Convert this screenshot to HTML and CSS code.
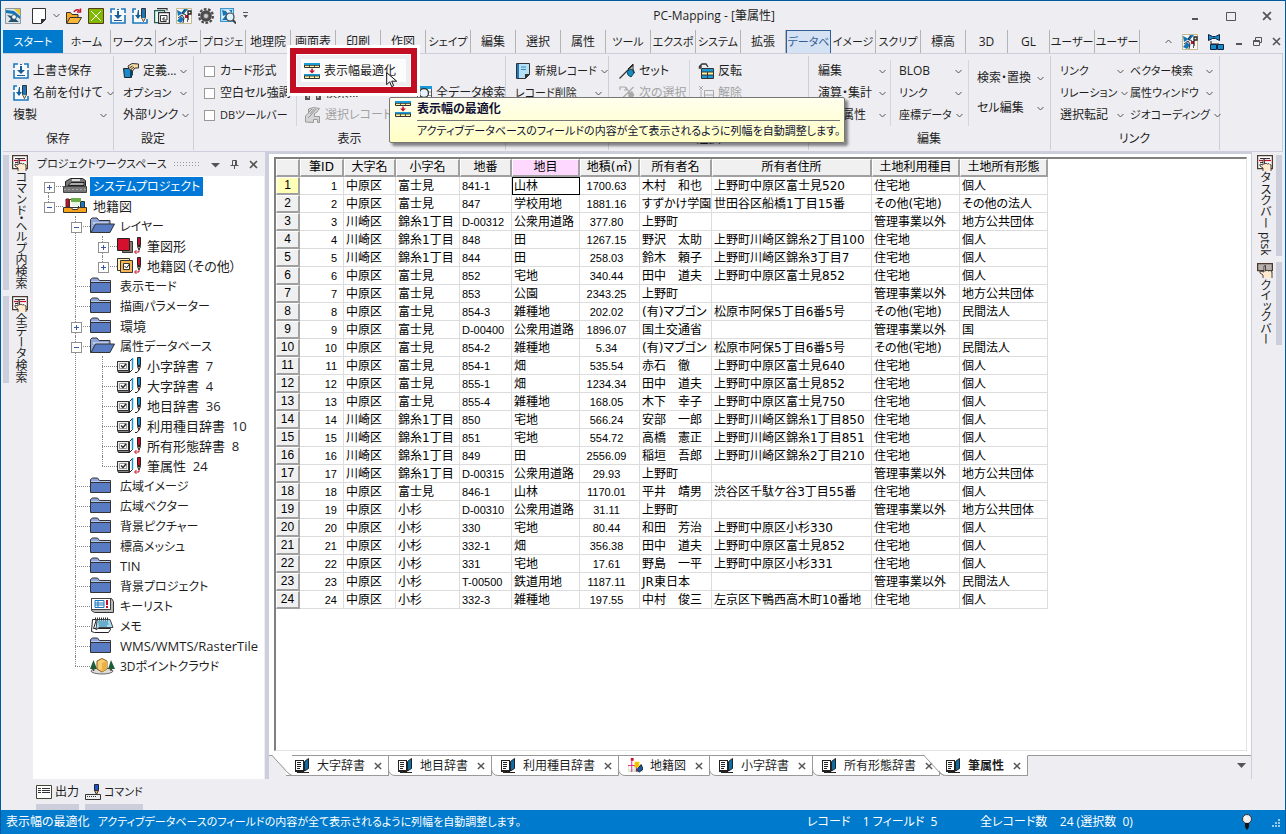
FILE: index.html
```html
<!DOCTYPE html>
<html lang="ja">
<head>
<meta charset="utf-8">
<title>PC-Mapping - [筆属性]</title>
<link rel="stylesheet" href="styles.css">
</head>
<body>
<svg class="defs" aria-hidden="true">
  <symbol id="app" viewBox="0 0 16 16"><path fill="#dfe6ea" stroke="#8b98a3" d="M.5.5h15v15H.5z"/><path fill="#1476b8" d="M1 2l8 1 6 5v3L8 6 1 5z"/><path fill="#e8c52a" d="M9 1h6v6z"/><path fill="#24506b" d="M2 7l5 1 7 6H3l3-3z"/><circle cx="9" cy="9" r="2.4" fill="#fff" stroke="#24506b"/></symbol>
  <symbol id="page" viewBox="0 0 16 16"><path fill="#fff" stroke="#333" d="M1.500.500h13v11l-4 4h-9z"/><path fill="#333" d="M10 16v-5h5z"/></symbol>
  <symbol id="open" viewBox="0 0 16 16"><path fill="#f5a623" stroke="#333" d="M.5 15V4.500h4l1.500 2h6V9"/><path fill="#fbb63a" stroke="#333" d="M.7 15.500L4 9.500h11.500l-3.500 6z"/><path fill="none" stroke="#c8102e" stroke-width="1.500" d="M8 4c1-2 3-3 5.500-1.500M14.500.5v3.500h-3.500"/></symbol>
  <symbol id="grid" viewBox="0 0 16 16"><path fill="#7fba00" stroke="#5a3a1e" d="M.5.500h15v15H.5z"/><path stroke="#fff" fill="none" d="M3 3l10 10M13 3L3 13"/></symbol>
  <symbol id="save" viewBox="0 0 16 16"><path fill="#f7f9fb" d="M1 1h14v14H1z"/><path fill="none" stroke="#1b78bd" stroke-width="1.600" d="M5 1H1v4M1 7v8h14V7M11 1h4v4"/><path fill="#1b5e97" d="M7 1h2v1H7zm0 2h2v4h3l-4 4-4-4h3zM4 12h8v1H4z"/></symbol>
  <symbol id="saveas" viewBox="0 0 16 16"><path fill="#f7f9fb" d="M1 1h14v14H1z"/><path fill="none" stroke="#1b78bd" stroke-width="1.600" d="M4 1H1v4M1 7v8h14v-4"/><path fill="#1b5e97" d="M6 2h1v5h2l-3 4-3-4h2z"/><path fill="#1b78bd" stroke="#333" d="M9.500.500h4v9l-2 4-2-4z"/><path fill="#ffd79a" d="M10 10h3l-1.500 3z"/></symbol>
  <symbol id="copy" viewBox="0 0 16 16"><path fill="#eafbf4" stroke="#235b50" stroke-width="1.200" d="M.6 2.600h10v12H.6z"/><path fill="#fff" stroke="#333" stroke-width="1.200" d="M4.600 4.600h10.800v10.800H4.600zM3 .6h10v2"/><path fill="none" stroke="#333" d="M12.500 13.500h-6v-6h6.500v4.500h-4v-2h2"/></symbol>
  <symbol id="map" viewBox="0 0 16 16"><path fill="#f5f7f8" stroke="#c9b98a" d="M.5.500h15v15H.5z"/><path fill="#1476b8" d="M1 2l6 3-5 3zM8 1h4L7 7 6 4zM1 13l4-5 3 3-3 4z"/><path fill="none" stroke="#333" d="M2 10l4-3 2 3-1 5M9 2l-3 3 4 2"/><path fill="#c8102e" d="M9 7h3v3H9z"/><path fill="none" stroke="#222" stroke-width="1.300" d="M12 12V3h3v3h-3M11 13h1"/></symbol>
  <symbol id="gear" viewBox="0 0 16 16"><circle cx="8" cy="8" r="6.900" fill="none" stroke="#4b4b4b" stroke-width="2.200" stroke-dasharray="2.700 1.600"/><circle cx="8" cy="8" r="4.300" fill="#777" stroke="#4b4b4b" stroke-width="3"/><circle cx="8" cy="8" r="2" fill="#ccc"/></symbol>
  <symbol id="mapfind" viewBox="0 0 16 16"><path fill="#e5f2fa" stroke="#3a95d0" stroke-width="1.300" d="M.6.600h12.800v12.800H.6z"/><path fill="#1476b8" d="M2 2l4 1 2 3-5 2zM9 2h3v3zM2 12l4-5 1 5z"/><circle cx="10" cy="9" r="4" fill="#dff1fb" stroke="#444" stroke-width="1.200"/><path stroke="#444" stroke-width="2" d="M13 12l3 3.500"/></symbol>
  <symbol id="define" viewBox="0 0 16 16"><path fill="#1b8ac9" stroke="#222" d="M.5 5.500h8v9h-7z"/><path fill="#14415f" d="M7 6l3-2v8l-3 3z"/><path fill="#f6d9a4" stroke="#333" d="M5 3l4-2.500 6.500.5v4H12L9.500 8 6 6z"/><path stroke="#333" d="M6.500 5l3-2M8 6.500l3-2.500"/></symbol>
  <symbol id="fit" viewBox="0 0 16 16"><path fill="#fff3a0" stroke="#333" d="M.5.500h15v4H.5zM.5 11.500h15v4H.5z"/><path fill="#1b9ad8" d="M0 0h16v2H0zM0 11h16v2H0z"/><path stroke="#333" stroke-width=".8" d="M0 2.500h16M5.500 2v3M10.500 2v3M0 13h16M5.500 13v3M10.500 13v3"/><path fill="#c8102e" d="M7.300 5.500h1.500v2H11L8 10.500l-3-3h2.300z"/></symbol>
  <symbol id="find" viewBox="0 0 16 16"><path fill="#555" d="M2 3h4v3h4V3h4l2 6v6h-5v-5H5v5H0V9z"/><path fill="#bbb" d="M2 10h2v3H2zM12 10h2v3h-2z"/></symbol>
  <symbol id="selrec" viewBox="0 0 16 16"><path fill="#d4d4d4" stroke="#999" d="M.5 15V9l3-3V2l5-1.500 6 1-3 4-2 1v3h5v6h-2v-3h-4v3z"/><path stroke="#999" d="M4 5l3-3M5 7l4-5M6 8l5-6M3 11l3-3"/></symbol>
  <symbol id="tablefind" viewBox="0 0 16 16"><path fill="#fff" stroke="#555" d="M1.500 1.500h14v13h-14z"/><path fill="#1b9ad8" d="M1 1h15v3H1z"/><path stroke="#999" d="M2 7h13M2 10.500h13"/><circle cx="8" cy="8" r="4.500" fill="#e9f5fc" stroke="#333" stroke-width="1.300"/><path stroke="#333" stroke-width="2" d="M5 12l-3 3"/></symbol>
  <symbol id="newrec" viewBox="0 0 16 16"><path fill="#b9dff5" stroke="#333" d="M1.500.500h13v11l-4 4h-9z"/><path fill="#1b78bd" d="M2 1h2v14H2z"/><path stroke="#2e8cc4" d="M6 4h5M6 6.500h5"/><path fill="#333" d="M10 16v-5h5z"/></symbol>
  <symbol id="set" viewBox="0 0 16 16"><path stroke="#333" stroke-width="1.300" d="M.5 15.500L14 2"/><path fill="#178bc8" stroke="#145" d="M8 8l5-2 2 4-3 4-3-2z"/><path stroke="#222" fill="none" d="M14 1l-5 5M14 1v5l1.500 4"/></symbol>
  <symbol id="nextsel" viewBox="0 0 16 16"><path fill="none" stroke="#aaa" stroke-width="1.200" d="M1 5V2h5l2 3-3 0M1 15.500L14.500 2"/><path fill="#aaa" d="M9 8l4-2 2.500 4-3 4-3-2z"/><path stroke="#aaa" d="M7 2l8 12"/></symbol>
  <symbol id="invert" viewBox="0 0 16 16"><path fill="none" stroke="#333" stroke-width="1.300" d="M3 5H.7M1 4l3-3h4l2 3M3 2v3"/><path fill="#fff3a0" stroke="#333" d="M3.500 5.500h12v10h-12z"/><path fill="#1b9ad8" d="M4 6h11v3H4zM4 12h11v3H4z"/><path stroke="#333" d="M4 9h11M4 12h11M9.500 9v6"/></symbol>
  <symbol id="clear" viewBox="0 0 16 16"><path fill="none" stroke="#aaa" d="M1 1l4 4M5 1L1 5M3 5v9h3M6.500 5.500h9v9h-9zM7 10h8"/></symbol>
  <symbol id="remote" viewBox="0 0 16 16"><path fill="#178bc8" stroke="#124" d="M.5.500l4 2h3l4-2v6l-4-2h-3l-4 2zM2.500 10.500h6v5h-6zM9.500 10.500h6v5h-6z"/><path stroke="#222" fill="none" d="M3 7v3h8"/></symbol>
  <symbol id="sysproj" viewBox="0 0 25 18"><path fill="#777" stroke="#222" d="M2.500 4.500l5-3h12l3 2v6h-20z"/><path fill="#aaa" stroke="#222" d="M8 5.500h13v3H5z"/><path fill="#ddd" d="M9 2h8v2H9z"/><path fill="#777" stroke="#444" d="M.5 9.500h23v6H.5z"/><path stroke="#aaa" stroke-dasharray="2 2" d="M1 12.500h22"/></symbol>
  <symbol id="proj" viewBox="0 0 25 18"><path fill="#fff" stroke="#333" d="M6.500 2.500h9v8h-9zM17.500 4.500h4v6h-4z"/><path fill="#6fae46" d="M8 1h10v4H8z"/><path fill="#e9f5e6" d="M9 5h8v4H9z"/><path fill="#c8102e" stroke="#622" d="M3 2h3v8H3z"/><path fill="#1b78bd" d="M18 5h3v6h-3z"/><path fill="#f6a21d" stroke="#333" d="M.5 10.500h8l1 2h5l1-2h8v5H.5z"/></symbol>
  <symbol id="folder" viewBox="0 0 25 18"><path fill="#8fa5dd" stroke="#333" d="M.5 14.500v-12l2-1.500h5l2 2.500h11v11z"/><path fill="#587bc4" d="M1 6h19v9H1z"/><path fill="none" stroke="#333" d="M.5 15.500v-10h20v10z"/><path stroke="#b9c8ec" d="M1 4.500h19"/></symbol>
  <symbol id="folderopen" viewBox="0 0 25 18"><path fill="#8fa5dd" stroke="#333" d="M.5 15.500v-13L2 1h5l2 2.500h11v5l-3 7z"/><path fill="#b9c8ec" d="M3 5h15v2H3z"/><path fill="#587bc4" stroke="#333" d="M1 15.500L5.500 7h19L20 15.500z"/></symbol>
  <symbol id="redpen" viewBox="0 0 8 18"><path fill="#c8102e" stroke="#222" d="M3.500.500h3v8h-3z"/><path fill="#ffe3b0" stroke="#222" d="M3.500 9.500h3L5 13z"/><path stroke="#c8102e" fill="none" d="M5 13v2H1M2.500 13L.5 15l2 2"/></symbol>
  <symbol id="bluepen" viewBox="0 0 8 18"><path fill="#178bc8" stroke="#222" d="M3.500.500h3v8h-3z"/><path fill="#ffe3b0" stroke="#222" d="M3.500 9.500h3L5 13z"/><path stroke="#222" fill="none" d="M5 13l-2 2.500H1"/></symbol>
  <symbol id="layer" viewBox="0 0 25 18"><path fill="#8d7b6f" stroke="#333" d="M5.500 4.500h10v11h-10z"/><path fill="#d5102e" stroke="#222" d="M.5 1.500h12v12H.5z"/><use href="#redpen" x="17" width="8" height="18"/></symbol>
  <symbol id="layers" viewBox="0 0 25 18"><path fill="#ffe9b5" stroke="#333" d="M.5 1.500h12v12H.5z"/><path fill="#f6b756" stroke="#333" d="M3.500 3.500h12v12h-12z"/><path fill="#fff" stroke="#333" d="M6.500 6.500h6v6h-6z"/><path fill="none" stroke="#222" d="M7.500 9l2 2 3-4"/><use href="#redpen" x="17" width="8" height="18"/></symbol>
  <symbol id="db" viewBox="0 0 17 18"><path fill="#888" stroke="#222" d="M1.500 15.500l-1-2v-9h11.500v11z"/><path fill="#eee" stroke="#333" d="M.5 4.500h11v9H.5z"/><path fill="#fff" stroke="#999" d="M2.500 6.500h7v5h-7z"/><path stroke="#222" stroke-width="1.400" fill="none" d="M4 8.500l2 2 3-3.500"/><path fill="#fff" stroke="#222" d="M12.500 15.500l3-3v-11l-3 3z"/><path stroke="#1b9ad8" stroke-width="1.500" d="M15.500 1v11"/></symbol>
  <symbol id="dbred" viewBox="0 0 25 18"><use href="#db" width="17" height="18"/><use href="#redpen" x="17" width="8" height="18"/></symbol>
  <symbol id="dbblue" viewBox="0 0 25 18"><use href="#db" width="17" height="18"/><use href="#bluepen" x="17" width="8" height="18"/></symbol>
  <symbol id="keylist" viewBox="0 0 25 18"><path fill="#bbb" stroke="#333" d="M4.500 15.500l-3-2V1.500h20l2 3v11z"/><path fill="#fff" stroke="#444" d="M1.500 1.500h19v11h-19z"/><path fill="#fff" stroke="#1b78bd" d="M5 3.500h9v7H5zM5 6h9M5 8h9M8 3.500v7"/><path fill="#c8102e" d="M16 3h2v5h-2zM16 9h2v2h-2z"/></symbol>
  <symbol id="memo" viewBox="0 0 25 18"><path fill="#fff" stroke="#222" d="M1.500 14.500l1-12h4l-3 9h17v1l-2 3h-14z"/><path fill="#a9dcf0" stroke="#444" d="M7 2.500h13l3 8H9l-3 2.500z"/><path stroke="#2a7fa5" d="M8 5h10M8.500 7h10M9 9h8"/><path stroke="#333" stroke-dasharray="1 1" stroke-width="3" d="M5 2h14"/></symbol>
  <symbol id="cloud" viewBox="0 0 25 18"><ellipse cx="12" cy="14" rx="11" ry="3" fill="#ddd" stroke="#666"/><path fill="#1f5c38" d="M3.500 3L7 12H0zM21 3l4 9h-7z"/><path stroke="#543" stroke-width="1.500" d="M3.500 12v2M21 12v2"/><path fill="#f7cf72" stroke="#8a5a1c" d="M7 4l5-2.500 5 2.500v8l-5 3-5-3z"/><path fill="#eab044" d="M12 6l5-2v8l-5 3z"/></symbol>
  <symbol id="book" viewBox="0 0 15 15"><path fill="#222" d="M0 2h9v12h5v1H2v-1H0z"/><path fill="#fff" d="M1 3h7v9H1z"/><path stroke="#222" d="M2 4.500h4M2 6.500h4M2 8.500h4M2 10.500h3"/><path fill="#0d6da4" stroke="#222" d="M9.500 3.500l4-3v10l-4 2.500z"/></symbol>
  <symbol id="atlas" viewBox="0 0 16 16"><path fill="#d8ead2" d="M0 8h16v7H0z"/><path fill="#fff" d="M1 5h5v7H1z"/><path stroke="#e0218a" d="M4 3v12M0 8h9M9 15V6"/><path fill="#c8102e" d="M3 0h3v3H3z"/><path fill="#f2c500" d="M7 4h5v6H7z"/><path fill="#1757a8" stroke="#222" d="M9 13l5-6 2 5-4 3z"/></symbol>
  <symbol id="handlist" viewBox="0 0 16 16"><path fill="#fff" stroke="#4b3a32" stroke-width="1.300" d="M.6.600h14.800v13H.6z"/><path stroke="#333" d="M3 3.500h10M3 7.500h5"/><path stroke="#c8102e" stroke-width="1.300" d="M2 5.500h12"/><path fill="#ffe9cf" stroke="#333" stroke-width=".9" d="M6 16v-3l-3-2V9l3 1V5l1.500-.5V9l1.500-1 1.500 1 1.500-.5 1 1 1 .5v6"/></symbol>
  <symbol id="handbar" viewBox="0 0 16 16"><path fill="#b9b1ab" stroke="#4b3a32" stroke-width="1.300" d="M.6 1.600h14.800v7H.6z"/><path fill="#ffe9cf" stroke="#333" stroke-width=".9" d="M6 16v-3l-3-2V9l4 1V4l1.500-.5V9l1.500-1 1.500 1 1.500-.5 1 1 1 .5v6"/></symbol>
  <symbol id="output" viewBox="0 0 16 16"><path fill="#fff" stroke="#443" d="M.5 1.500h15v13H.5z"/><path stroke="#333" d="M2 4.500h3M6 4.500h8M2 6.500h3M6 6.500h8M2 8.500h3M6 8.500h8"/></symbol>
  <symbol id="command" viewBox="0 0 16 16"><path fill="#eee" stroke="#333" d="M.5 10.500h15v5H.5z"/><path stroke="#333" stroke-dasharray="1 1" d="M2 12.500h9"/><path fill="#1b55c8" stroke="#223" d="M9.500.500h4v6h-4z"/><path fill="#f9b24d" stroke="#333" d="M9.500 6.500h4l-2 4z"/></symbol>
  <symbol id="chev" viewBox="0 0 7 7"><path fill="none" stroke="#555" d="M.5 2l3 3 3-3"/></symbol>
  <symbol id="x" viewBox="0 0 9 9"><path fill="none" stroke="#555" stroke-width="1.600" d="M1 1l7 7M8 1L1 8"/></symbol>
  <symbol id="bulb" viewBox="0 0 12 16"><circle cx="6" cy="5" r="4.500" fill="#eee" stroke="#333"/><path fill="#111" d="M4 9h4v4l-2 3-2-3z"/><path stroke="#fff" stroke-width="1.500" d="M4 3l2 2"/></symbol>
</svg>

<header class="titlebar">
  <div class="quick">
    <svg class="i16 appicon"><use href="#app"/></svg>
    <button aria-label="新規"><svg class="i16"><use href="#page"/></svg></button>
    <button class="tiny" aria-label="新規メニュー"><svg class="chev"><use href="#chev"/></svg></button>
    <button aria-label="開く"><svg class="i16"><use href="#open"/></svg></button>
    <button aria-label="表"><svg class="i16"><use href="#grid"/></svg></button>
    <button aria-label="保存"><svg class="i16"><use href="#save"/></svg></button>
    <button aria-label="別名保存"><svg class="i16"><use href="#saveas"/></svg></button>
    <button aria-label="複写"><svg class="i16"><use href="#copy"/></svg></button>
    <button aria-label="地図"><svg class="i16"><use href="#map"/></svg></button>
    <button aria-label="設定"><svg class="i16"><use href="#gear"/></svg></button>
    <button aria-label="地図検索"><svg class="i16"><use href="#mapfind"/></svg></button>
    <button class="tiny" aria-label="カスタマイズ"><svg class="chev" viewBox="0 0 7 7"><path fill="#555" d="M1 0h5v1H1zM1 3h5L3.500 6z"/></svg></button>
  </div>
  <h1>PC-Mapping - [筆属性]</h1>
  <div class="winbtns">
    <button aria-label="最小化"><svg viewBox="0 0 10 10"><path fill="#555" d="M2 7h6v2H2z"/></svg></button>
    <button aria-label="最大化"><svg viewBox="0 0 10 10"><path fill="none" stroke="#555" d="M.5 1.500h9v8h-9z"/></svg></button>
    <button aria-label="閉じる"><svg><use href="#x"/></svg></button>
  </div>
</header>

<nav class="tabs">
  <button class="start kana">スタート</button><button class="home kana">ホーム</button><button class="kana">ワークス</button><button class="kana">インポー</button><button class="kana">プロジェ</button><button>地理院</button><button>画面表</button><button>印刷</button><button>作図</button><button class="kana">シェイプ</button><button>編集</button><button>選択</button><button>属性</button><button class="kana">ツール</button><button class="kana">エクスポ</button><button class="kana">システム</button><button>拡張</button><button class="current kana">データベ</button><button class="kana">イメージ</button><button class="kana">スクリプ</button><button>標高</button><button class="short">3D</button><button class="short">GL</button><button class="kana">ユーザー</button><button class="kana">ユーザー</button>
  <div class="tabtools">
    <button aria-label="リボンを閉じる"><svg class="chev" viewBox="0 0 7 7"><path fill="none" stroke="#555" d="M.5 5l3-3 3 3"/></svg></button>
    <button aria-label="地図"><svg class="i16"><use href="#map"/></svg></button>
    <button aria-label="リモート"><svg class="i16"><use href="#remote"/></svg></button>
    <button aria-label="最小化"><svg class="i9" viewBox="0 0 9 9"><path fill="#555" d="M2 6h6v2H2z"/></svg></button>
    <button aria-label="元に戻す"><svg class="i9" viewBox="0 0 9 9"><path fill="none" stroke="#555" d="M2.500 3V.500h6v5H6M.5 3.500h6v5h-6zM0 4.500h6"/></svg></button>
    <button aria-label="閉じる"><svg class="i9"><use href="#x"/></svg></button>
  </div>
</nav>

<section class="ribbon">
  <div class="group g-save">
    <div class="cols"><div class="col">
      <button><svg class="i16"><use href="#save"/></svg>上書き保存</button>
      <button><svg class="i16"><use href="#saveas"/></svg>名前を付けて<svg class="chev"><use href="#chev"/></svg></button>
      <button>複製<svg class="chev"><use href="#chev"/></svg></button>
    </div></div>
    <h2>保存</h2>
  </div>
  <div class="group g-set">
    <div class="cols"><div class="col">
      <button><svg class="i16"><use href="#define"/></svg>定義...<svg class="chev"><use href="#chev"/></svg></button>
      <button class="kana">オプション<svg class="chev"><use href="#chev"/></svg></button>
      <button>外部リンク<svg class="chev"><use href="#chev"/></svg></button>
    </div></div>
    <h2>設定</h2>
  </div>
  <div class="group g-view">
    <div class="cols">
      <div class="col checks">
        <label><input type="checkbox">カード形式</label>
        <label><input type="checkbox">空白セル強調</label>
        <label class="kana"><input type="checkbox">DBツールバー</label>
      </div>
      <div class="col display">
        <button class="spot"><span class="face"><svg class="i16"><use href="#fit"/></svg>表示幅最適化</span></button>
        <button><svg class="i16"><use href="#find"/></svg>検索...</button>
        <button disabled><svg class="i16"><use href="#selrec"/></svg>選択レコードのみ</button>
        <svg class="cursor" viewBox="0 0 12 17"><path fill="#fff" stroke="#111" d="M.7.700v12l3-3 2 5 2-1-2-4.500h5z"/></svg>
        <div class="tip" role="tooltip">
          <svg class="i16"><use href="#fit"/></svg>
          <div><strong>表示幅の最適化</strong><p>アクティブデータベースのフィールドの内容が全て表示されるように列幅を自動調整します。</p></div>
        </div>
      </div>
      <div class="col whole">
        <span></span>
        <button><svg class="i16"><use href="#tablefind"/></svg>全データ検索</button>
      </div>
    </div>
    <h2>表示</h2>
  </div>
  <div class="group g-rec">
    <div class="cols"><div class="col">
      <button class="kana"><svg class="i16"><use href="#newrec"/></svg>新規レコード<svg class="chev"><use href="#chev"/></svg></button>
      <button class="kana">レコード削除<svg class="chev"><use href="#chev"/></svg></button>
    </div></div>
    <h2>レコード</h2>
  </div>
  <div class="group g-sel">
    <div class="cols">
      <div class="col">
        <button><svg class="i16"><use href="#set"/></svg>セット</button>
        <button disabled><svg class="i16"><use href="#nextsel"/></svg>次の選択</button>
      </div>
      <div class="col">
        <button><svg class="i16"><use href="#invert"/></svg>反転</button>
        <button disabled><svg class="i16"><use href="#clear"/></svg>解除</button>
      </div>
    </div>
    <h2>選択</h2>
  </div>
  <div class="group g-edit">
    <div class="cols">
      <div class="col">
        <button>編集<svg class="chev"><use href="#chev"/></svg></button>
        <button>演算・集計<svg class="chev"><use href="#chev"/></svg></button>
        <button>転記属性<svg class="chev"><use href="#chev"/></svg></button>
      </div>
      <div class="col">
        <button>BLOB<svg class="chev"><use href="#chev"/></svg></button>
        <button class="kana">リンク<svg class="chev"><use href="#chev"/></svg></button>
        <button class="kana">座標データ<svg class="chev"><use href="#chev"/></svg></button>
      </div>
      <div class="col pair">
        <button>検索・置換<svg class="chev"><use href="#chev"/></svg></button>
        <button>セル編集<svg class="chev"><use href="#chev"/></svg></button>
      </div>
    </div>
    <h2>編集</h2>
  </div>
  <div class="group g-link">
    <div class="cols">
      <div class="col">
        <button class="kana">リンク<svg class="chev"><use href="#chev"/></svg></button>
        <button class="kana">リレーション<svg class="chev"><use href="#chev"/></svg></button>
        <button>選択転記<svg class="chev"><use href="#chev"/></svg></button>
      </div>
      <div class="col">
        <button class="kana">ベクター検索<svg class="chev"><use href="#chev"/></svg></button>
        <button class="kana">属性ウィンドウ<svg class="chev"><use href="#chev"/></svg></button>
        <button class="kana">ジオコーディング<svg class="chev"><use href="#chev"/></svg></button>
      </div>
    </div>
    <h2>リンク</h2>
  </div>
</section>

<main class="work">
  <nav class="side left">
    <button><svg class="i16"><use href="#handlist"/></svg>コマンド・ヘルプ内検索</button>
    <button><svg class="i16"><use href="#handlist"/></svg>全データ検索</button>
  </nav>

  <aside class="panel">
    <header>
      <h2 class="kana">プロジェクトワークスペース</h2><i class="dots"></i>
      <button aria-label="メニュー"><svg class="i9" viewBox="0 0 9 9"><path fill="#555" d="M0 3h9L4.500 7.500z"/></svg></button>
      <button aria-label="固定"><svg class="i9" viewBox="0 0 9 9"><path fill="none" stroke="#555" d="M2.500 5.500v-5h4v5M5.500 0v5M.5 5.500h8M4.500 6v3"/></svg></button>
      <button aria-label="閉じる"><svg class="i9"><use href="#x"/></svg></button>
    </header>
    <ul class="tree">
      <li><div class="node plus"><svg><use href="#sysproj"/></svg><span class="chosen kana">システムプロジェクト</span></div></li>
      <li><div class="node minus"><svg><use href="#proj"/></svg><span>地籍図</span></div>
        <ul>
          <li><div class="node minus"><svg><use href="#folderopen"/></svg><span class="kana">レイヤー</span></div>
            <ul>
              <li><div class="node plus"><svg><use href="#layer"/></svg><span>筆図形</span></div></li>
              <li><div class="node plus"><svg><use href="#layers"/></svg><span>地籍図（その他）</span></div></li>
            </ul>
          </li>
          <li><div class="node"><svg><use href="#folder"/></svg><span class="kana">表示モード</span></div></li>
          <li><div class="node"><svg><use href="#folder"/></svg><span class="kana">描画パラメーター</span></div></li>
          <li><div class="node plus"><svg><use href="#folder"/></svg><span>環境</span></div></li>
          <li><div class="node minus"><svg><use href="#folderopen"/></svg><span class="kana">属性データベース</span></div>
            <ul>
              <li><div class="node"><svg><use href="#dbblue"/></svg><span>小字辞書  7</span></div></li>
              <li><div class="node"><svg><use href="#dbblue"/></svg><span>大字辞書  4</span></div></li>
              <li><div class="node"><svg><use href="#dbblue"/></svg><span>地目辞書  36</span></div></li>
              <li><div class="node"><svg><use href="#dbblue"/></svg><span>利用種目辞書  10</span></div></li>
              <li><div class="node"><svg><use href="#dbred"/></svg><span>所有形態辞書  8</span></div></li>
              <li><div class="node"><svg><use href="#dbred"/></svg><span>筆属性  24</span></div></li>
            </ul>
          </li>
          <li><div class="node"><svg><use href="#folder"/></svg><span class="kana">広域イメージ</span></div></li>
          <li><div class="node"><svg><use href="#folder"/></svg><span class="kana">広域ベクター</span></div></li>
          <li><div class="node"><svg><use href="#folder"/></svg><span class="kana">背景ピクチャー</span></div></li>
          <li><div class="node"><svg><use href="#folder"/></svg><span class="kana">標高メッシュ</span></div></li>
          <li><div class="node"><svg><use href="#folder"/></svg><span>TIN</span></div></li>
          <li><div class="node"><svg><use href="#folder"/></svg><span class="kana">背景プロジェクト</span></div></li>
          <li><div class="node"><svg><use href="#keylist"/></svg><span class="kana">キーリスト</span></div></li>
          <li><div class="node"><svg><use href="#memo"/></svg><span class="kana">メモ</span></div></li>
          <li><div class="node"><svg><use href="#folder"/></svg><span>WMS/WMTS/RasterTile</span></div></li>
          <li><div class="node"><svg><use href="#cloud"/></svg><span class="kana">3Dポイントクラウド</span></div></li>
        </ul>
      </li>
    </ul>
  </aside>

  <section class="doc">
    <div class="sheet">
      <div class="frame">
      <table>
        <colgroup><col class="w24"><col class="w44"><col class="w52"><col class="w64"><col class="w52"><col class="w68"><col class="w60"><col class="w72"><col class="w160"><col class="w88"><col class="w88"></colgroup>
        <thead><tr><th></th><th>筆ID</th><th>大字名</th><th>小字名</th><th>地番</th><th class="field">地目</th><th>地積(㎡)</th><th>所有者名</th><th>所有者住所</th><th>土地利用種目</th><th>土地所有形態</th></tr></thead>
        <tbody>
        <tr class="now"><th>1</th><td>1</td><td>中原区</td><td>富士見</td><td>841-1</td><td>山林</td><td>1700.63</td><td>木村　和也</td><td>上野町中原区富士見520</td><td>住宅地</td><td>個人</td></tr>
        <tr><th>2</th><td>2</td><td>中原区</td><td>富士見</td><td>847</td><td>学校用地</td><td>1881.16</td><td>すずかけ学園</td><td>世田谷区船橋1丁目15番</td><td>その他(宅地)</td><td>その他の法人</td></tr>
        <tr><th>3</th><td>3</td><td>川崎区</td><td>錦糸1丁目</td><td>D-00312</td><td>公衆用道路</td><td>377.80</td><td>上野町</td><td></td><td>管理事業以外</td><td>地方公共団体</td></tr>
        <tr><th>4</th><td>4</td><td>川崎区</td><td>錦糸1丁目</td><td>848</td><td>田</td><td>1267.15</td><td>野沢　太助</td><td>上野町川崎区錦糸2丁目100</td><td>住宅地</td><td>個人</td></tr>
        <tr><th>5</th><td>5</td><td>川崎区</td><td>錦糸1丁目</td><td>844</td><td>田</td><td>258.03</td><td>鈴木　頼子</td><td>上野町川崎区錦糸3丁目7</td><td>住宅地</td><td>個人</td></tr>
        <tr><th>6</th><td>6</td><td>中原区</td><td>富士見</td><td>852</td><td>宅地</td><td>340.44</td><td>田中　道夫</td><td>上野町中原区富士見852</td><td>住宅地</td><td>個人</td></tr>
        <tr><th>7</th><td>7</td><td>中原区</td><td>富士見</td><td>853</td><td>公園</td><td>2343.25</td><td>上野町</td><td></td><td>管理事業以外</td><td>地方公共団体</td></tr>
        <tr><th>8</th><td>8</td><td>中原区</td><td>富士見</td><td>854-3</td><td>雑種地</td><td>202.02</td><td>(有)マブゴン</td><td>松原市阿保5丁目6番5号</td><td>その他(宅地)</td><td>民間法人</td></tr>
        <tr><th>9</th><td>9</td><td>中原区</td><td>富士見</td><td>D-00400</td><td>公衆用道路</td><td>1896.07</td><td>国土交通省</td><td></td><td>管理事業以外</td><td>国</td></tr>
        <tr><th>10</th><td>10</td><td>中原区</td><td>富士見</td><td>854-2</td><td>雑種地</td><td>5.34</td><td>(有)マブゴン</td><td>松原市阿保5丁目6番5号</td><td>その他(宅地)</td><td>民間法人</td></tr>
        <tr><th>11</th><td>11</td><td>中原区</td><td>富士見</td><td>854-1</td><td>畑</td><td>535.54</td><td>赤石　徹</td><td>上野町中原区富士見640</td><td>住宅地</td><td>個人</td></tr>
        <tr><th>12</th><td>12</td><td>中原区</td><td>富士見</td><td>855-1</td><td>畑</td><td>1234.34</td><td>田中　道夫</td><td>上野町中原区富士見852</td><td>住宅地</td><td>個人</td></tr>
        <tr><th>13</th><td>13</td><td>中原区</td><td>富士見</td><td>855-4</td><td>雑種地</td><td>168.05</td><td>木下　幸子</td><td>上野町中原区富士見750</td><td>住宅地</td><td>個人</td></tr>
        <tr><th>14</th><td>14</td><td>川崎区</td><td>錦糸1丁目</td><td>850</td><td>宅地</td><td>566.24</td><td>安部　一郎</td><td>上野町川崎区錦糸1丁目850</td><td>住宅地</td><td>個人</td></tr>
        <tr><th>15</th><td>15</td><td>川崎区</td><td>錦糸1丁目</td><td>851</td><td>宅地</td><td>554.72</td><td>高橋　憲正</td><td>上野町川崎区錦糸1丁目851</td><td>住宅地</td><td>個人</td></tr>
        <tr><th>16</th><td>16</td><td>川崎区</td><td>錦糸1丁目</td><td>849</td><td>田</td><td>2556.09</td><td>稲垣　吾郎</td><td>上野町川崎区錦糸2丁目210</td><td>住宅地</td><td>個人</td></tr>
        <tr><th>17</th><td>17</td><td>川崎区</td><td>錦糸1丁目</td><td>D-00315</td><td>公衆用道路</td><td>29.93</td><td>上野町</td><td></td><td>管理事業以外</td><td>地方公共団体</td></tr>
        <tr><th>18</th><td>18</td><td>中原区</td><td>富士見</td><td>846-1</td><td>山林</td><td>1170.01</td><td>平井　靖男</td><td>渋谷区千駄ケ谷3丁目55番</td><td>住宅地</td><td>個人</td></tr>
        <tr><th>19</th><td>19</td><td>中原区</td><td>小杉</td><td>D-00310</td><td>公衆用道路</td><td>31.11</td><td>上野町</td><td></td><td>管理事業以外</td><td>地方公共団体</td></tr>
        <tr><th>20</th><td>20</td><td>中原区</td><td>小杉</td><td>330</td><td>宅地</td><td>80.44</td><td>和田　芳治</td><td>上野町中原区小杉330</td><td>住宅地</td><td>個人</td></tr>
        <tr><th>21</th><td>21</td><td>中原区</td><td>小杉</td><td>332-1</td><td>畑</td><td>356.38</td><td>田中　道夫</td><td>上野町中原区富士見852</td><td>住宅地</td><td>個人</td></tr>
        <tr><th>22</th><td>22</td><td>中原区</td><td>小杉</td><td>331</td><td>宅地</td><td>17.61</td><td>野島　一平</td><td>上野町中原区小杉331</td><td>住宅地</td><td>個人</td></tr>
        <tr><th>23</th><td>23</td><td>中原区</td><td>小杉</td><td>T-00500</td><td>鉄道用地</td><td>1187.11</td><td>JR東日本</td><td></td><td>管理事業以外</td><td>民間法人</td></tr>
        <tr><th>24</th><td>24</td><td>中原区</td><td>小杉</td><td>332-3</td><td>雑種地</td><td>197.55</td><td>中村　俊三</td><td>左京区下鴨西高木町10番地</td><td>住宅地</td><td>個人</td></tr>
        </tbody>
      </table>
      </div>
    </div>
    <nav class="doctabs">
      <svg class="slope" viewBox="0 0 20 21"><path fill="#fff" d="M0 0h20v20z"/><path fill="none" stroke="#999" d="M0 .5L16 18l4 2.500"/></svg>
      <button class="first"><svg class="i15"><use href="#book"/></svg>大字辞書<svg class="close"><use href="#x"/></svg></button>
      <button><svg class="i15"><use href="#book"/></svg>地目辞書<svg class="close"><use href="#x"/></svg></button>
      <button><svg class="i15"><use href="#book"/></svg>利用種目辞書<svg class="close"><use href="#x"/></svg></button>
      <button><svg class="i15"><use href="#atlas"/></svg>地籍図<svg class="close"><use href="#x"/></svg></button>
      <button><svg class="i15"><use href="#book"/></svg>小字辞書<svg class="close"><use href="#x"/></svg></button>
      <button><svg class="i15"><use href="#book"/></svg>所有形態辞書<svg class="close"><use href="#x"/></svg></button>
      <button class="active"><svg class="edge" viewBox="0 0 20 21"><path fill="#fff" d="M0 0h20v20z"/><path fill="none" stroke="#999" d="M0 .5L16 18l4 2.500"/></svg><svg class="i15"><use href="#book"/></svg>筆属性<svg class="close"><use href="#x"/></svg></button>
      <button class="more" aria-label="一覧"><svg class="i9" viewBox="0 0 9 9"><path fill="#555" d="M0 2h9L4.500 7z"/></svg></button>
    </nav>
  </section>

  <nav class="side right">
    <button><svg class="i16"><use href="#handlist"/></svg>タスクバー ptsk</button>
    <button><svg class="i16"><use href="#handbar"/></svg>クイックバー</button>
  </nav>
</main>

<nav class="dock">
  <button><svg class="i16"><use href="#output"/></svg>出力</button>
  <button class="kana"><svg class="i16"><use href="#command"/></svg>コマンド</button>
</nav>

<footer class="status">
  <span>表示幅の最適化</span><span class="hint kana">アクティブデータベースのフィールドの内容が全て表示されるように列幅を自動調整します。</span>
  <span class="rec">レコード    1 フィールド  5</span><span class="all">全レコード数    24 (選択数  0)</span>
  <svg class="bulb"><use href="#bulb"/></svg>
  <svg class="i9" viewBox="0 0 9 9"><path fill="#9cc9ea" d="M7 1h2v2H7zM4 4h2v2H4zM7 4h2v2H7zM1 7h2v2H1zM4 7h2v2H4zM7 7h2v2H7z"/></svg>
</footer>
</body>
</html>
```
FILE: styles.css
```css
* { box-sizing: border-box; }
html, body { height: 100%; }
body {
  margin: 0;
  min-height: 100vh;
  display: flex;
  flex-direction: column;
  border: 1px solid #005a9e;
  border-bottom: 0;
  background: #eeeef2;
  color: #1e1e1e;
  font: 12px/16px "Open Sans", "Noto Sans CJK JP", sans-serif;
  font-feature-settings: "palt";
  overflow: hidden;
}
h1, h2, p, ul { margin: 0; padding: 0; font-size: 12px; font-weight: 400; }
ul { list-style: none; }
svg { flex: none; display: block; }
.defs { position: absolute; width: 0; height: 0; }
button {
  display: flex;
  align-items: center;
  padding: 0;
  border: 0;
  background: none;
  color: inherit;
  font: inherit;
  font-feature-settings: inherit;
  white-space: nowrap;
}
.kana { font-size: 11px; }
.i16 { width: 16px; height: 16px; }
.i15 { width: 15px; height: 15px; }
.i9 { width: 9px; height: 9px; }
.chev { width: 7px; height: 7px; }

/* Title bar */
.titlebar { display: flex; align-items: center; height: 29px; flex: none; }
.quick { display: flex; align-items: center; gap: 6px; padding-left: 4px; width: 250px; }
.appicon { margin-right: 4px; }
.quick .tiny { width: 7px; justify-content: center; }
.titlebar h1 { flex: 1; text-align: center; }
.winbtns { display: flex; }
.winbtns button { width: 36px; height: 28px; justify-content: center; }
.winbtns svg { width: 10px; height: 10px; }

/* Ribbon tabs */
.tabs { display: flex; height: 23px; flex: none; padding: 0 4px 0 2px; }
.tabs > button {
  width: 45px;
  flex: none;
  justify-content: center;
  overflow: hidden;
  border-right: 1px solid #b4b4b4;
}
.tabs > .start { width: 60px; background: #007acc; color: #fff; border: 0; }
.tabs > .home { width: 48px; }
.tabs > .short { width: 42px; }
.tabs > .current { background: #d5e2f4; border: 1px solid #335f94; border-bottom: 0; color: #335f94; }
.tabtools { display: flex; align-items: center; gap: 10px; margin-left: auto; }

/* Ribbon */
.ribbon {
  display: flex;
  flex: none;
  margin: 0 2px;
  padding: 2px 0 1px;
  border: 1px solid #cccedb;
  border-left: 0;
}
.group { border-right: 1px solid #cccedb; padding: 4px 6px 0 10px; }
.group h2 { text-align: center; padding: 5px 0 3px; margin-left: -4px; }
.cols { display: flex; height: 66px; }
.col { display: grid; grid-template-rows: repeat(3, 22px); flex: 1; min-width: 0; }
.col + .col { border-left: 1px solid #d4d5df; padding-left: 8px; }
.col > button { gap: 4px; min-width: 0; }
.col > button .chev { margin-left: auto; }
.col > button:disabled { color: #a3a3a3; }
.g-save { width: 111px; }
.g-set { width: 80px; padding-left: 9px; }
.g-view { width: 312px; }
.g-rec { width: 103px; padding-left: 9px; }
.g-sel { width: 200px; }
.g-edit { width: 242px; padding-left: 9px; }
.g-link { width: 169px; padding-left: 9px; }
.checks { flex: 0 0 92px; }
.checks label { display: flex; align-items: center; gap: 5px; white-space: nowrap; overflow: hidden; }
.checks input { appearance: none; width: 11px; height: 11px; flex: none; margin: 0; background: #fff; border: 1px solid #999; }
.display { flex: 0 0 118px; position: relative; }
.whole.col { border: 0; padding-left: 2px; }
.g-sel .col:first-child { flex: 0 0 70px; }
.g-edit .col:nth-child(1) { flex: 0 0 72px; padding-right: 4px; }
.g-edit .col:nth-child(2) { flex: 0 0 78px; padding-right: 6px; }
.pair { grid-template-rows: 30px 30px; align-content: center; }
.g-link .col:first-child { flex: 0 0 64px; }
.g-link .col + .col { border: 0; padding-left: 6px; }

/* Highlighted command with its tooltip */
.display > .spot {
  position: relative;
  z-index: 2;
  margin: -6px 0 -5px -9px;
  width: 115px;
  height: 33px;
  padding: 4px;
  background: #eeeef2;
  border: 1px solid #fff;
  box-shadow: 0 0 0 6px #c30d23, 0 0 0 9px #fff;
}
.face { display: flex; align-items: center; gap: 4px; flex: 1; height: 23px; padding-left: 3px; background: #fcfcfc; }
.cursor { position: absolute; z-index: 3; left: 89px; top: 12px; width: 12px; height: 17px; }
.tip {
  position: absolute;
  z-index: 4;
  left: 92px;
  top: 37px;
  display: flex;
  gap: 6px;
  padding: 3px 4px 3px 5px;
  background: linear-gradient(#ffffee, #ffffc4);
  border: 1px solid #767676;
  border-radius: 2px;
  box-shadow: 3px 3px 3px #0007;
  color: #111133;
  white-space: nowrap;
}
.tip strong { display: block; padding-bottom: 3px; border-bottom: 1px solid #767676; }
.tip p { padding-top: 2px; font-size: 11px; }

/* Work area */
.work { display: flex; flex: 1; min-height: 0; padding: 0 2px; }
.side { display: flex; flex-direction: column; align-items: flex-start; gap: 6px; padding-top: 3px; width: 30px; flex: none; }
.side button { writing-mode: vertical-rl; gap: 1px; font-feature-settings: "vpal"; width: 26px; }
.side.left button { border-left: 6px solid #cccedb; padding-left: 2px; }
.side.right { width: 32px; border-left: 1px solid #cccedb; padding-left: 4px; }
.side.right button { border-right: 6px solid #cccedb; padding-right: 3px; }
.panel { width: 231px; flex: none; display: flex; flex-direction: column; }
.panel header { display: flex; align-items: center; height: 24px; padding: 0 6px 0 4px; gap: 10px; }
.panel h2 { white-space: nowrap; font-size: 11px; }
.dots { flex: 1; height: 6px; margin-left: -4px; background: radial-gradient(#999 35%, transparent 40%) 0 0 / 3px 3px; }

/* Tree */
.tree { flex: 1; background: #fff; padding-left: 11px; font-size: 13px; line-height: 19px; }
.tree ul { padding-left: 27px; font-size: 13px; }
.tree .kana { font-size: 12px; }
.tree li { position: relative; }
.tree li::before { content: ""; position: absolute; left: 4px; top: 0; bottom: 0; border-left: 1px dotted #888; }
.tree li:last-child::before { bottom: auto; height: 10px; }
.tree > li:first-child::before { top: 10px; }
.node { position: relative; display: flex; align-items: center; height: 20px; padding-left: 19px; white-space: pre; }
.node::before { content: ""; position: absolute; left: 4px; top: 10px; width: 15px; border-top: 1px dotted #888; }
.plus::after, .minus::after {
  content: "";
  position: absolute;
  left: 0;
  top: 6px;
  width: 9px;
  height: 9px;
  border: 1px solid #919191;
  background: linear-gradient(#3a57a8, #3a57a8) center / 5px 1px no-repeat, #fff;
}
.plus::after { background: linear-gradient(#3a57a8, #3a57a8) center / 5px 1px no-repeat, linear-gradient(#3a57a8, #3a57a8) center / 1px 5px no-repeat, #fff; }
.node svg { width: 25px; height: 18px; }
.node span { margin-left: 2px; padding: 0 3px; }
.chosen { background: #0078d7; color: #fff; }

/* Document */
.doc { flex: 1; min-width: 0; display: flex; flex-direction: column; margin-left: 1px; border-left: 4px solid #cccedb; border-top: 2px solid #cccedb; }
.sheet { flex: 1; min-height: 0; display: flex; background: #fff; padding: 3px 4px 4px 5px; border-bottom: 1px solid #999; }
.frame { flex: 1; min-width: 0; overflow: hidden; border: 1px solid #e3e3e3; border-top: 2px solid #808080; border-left: 2px solid #808080; }
table {
  border-collapse: separate;
  border-spacing: 0;
  table-layout: fixed;
  width: 772px;
  color: #000;
  font: 12px/16px "DejaVu Sans", "Noto Sans CJK JP", sans-serif;
  font-feature-settings: "palt";
}
.w24 { width: 24px; } .w44 { width: 44px; } .w52 { width: 52px; } .w60 { width: 60px; } .w64 { width: 64px; }
.w68 { width: 68px; } .w72 { width: 72px; } .w88 { width: 88px; } .w160 { width: 160px; }
th, td { height: 18px; padding: 0 2px; border-right: 1px solid #dcdcdc; border-bottom: 1px solid #dcdcdc; white-space: nowrap; text-align: left; line-height: 16px; }
th { padding: 0; text-align: center; font-weight: 400; background: #f0f0f0; border: 1px solid #fff; border-right: 2px solid #a0a0a0; border-bottom: 2px solid #a0a0a0; line-height: 15px; }
thead th { height: 18px; }
thead .field { background: #ffd8ff; }
tbody th { font-family: "Liberation Sans", sans-serif; }
.now th { background: #ffffb8; }
.now td:nth-child(6) { outline: 1px solid #000; outline-offset: -1px; }
td:nth-child(2), td:nth-child(5), td:nth-child(7) { font-family: "Liberation Sans", sans-serif; font-size: 11px; }
td:nth-child(2) { text-align: right; padding-right: 6px; }
td:nth-child(7) { text-align: center; padding-right: 8px; }

/* Document tabs */
.doctabs { display: flex; height: 24px; padding: 0 5px 3px 3px; margin-top: -1px; }
.doctabs button {
  gap: 7px;
  padding: 0 6px 0 9px;
  margin-left: -1px;
  background: #fff;
  border: 1px solid #999;
  border-bottom-left-radius: 7px;
}
.doctabs .slope { width: 20px; height: 21px; margin-right: -6px; position: relative; z-index: 1; }
.doctabs button.first { border-left: 0; border-radius: 0; margin-left: 0; }
.close { width: 8px; height: 8px; margin-left: 2px; }
.doctabs .active { position: relative; border-top-color: #fff; border-left: 0; padding-left: 7px; font-weight: 700; }
.edge { position: absolute; left: -15px; top: -1px; width: 20px; height: 21px; }
.doctabs .more { margin-left: auto; border: 0; background: none; padding: 0; }

/* Dock and status bar */
.dock { display: flex; flex: none; gap: 6px; padding: 0 0 0 35px; height: 31px; }
.dock button { gap: 3px; border-bottom: 6px solid #cccedb; }
.status { display: flex; align-items: center; flex: none; height: 24px; padding: 0 6px; margin: 0 -1px; background: #007acc; color: #fff; white-space: pre; }
.hint { margin-left: 8px; flex: 1; }
.rec { width: 173px; }
.all { width: 261px; }
.bulb { width: 12px; height: 16px; margin-right: 18px; }
```
